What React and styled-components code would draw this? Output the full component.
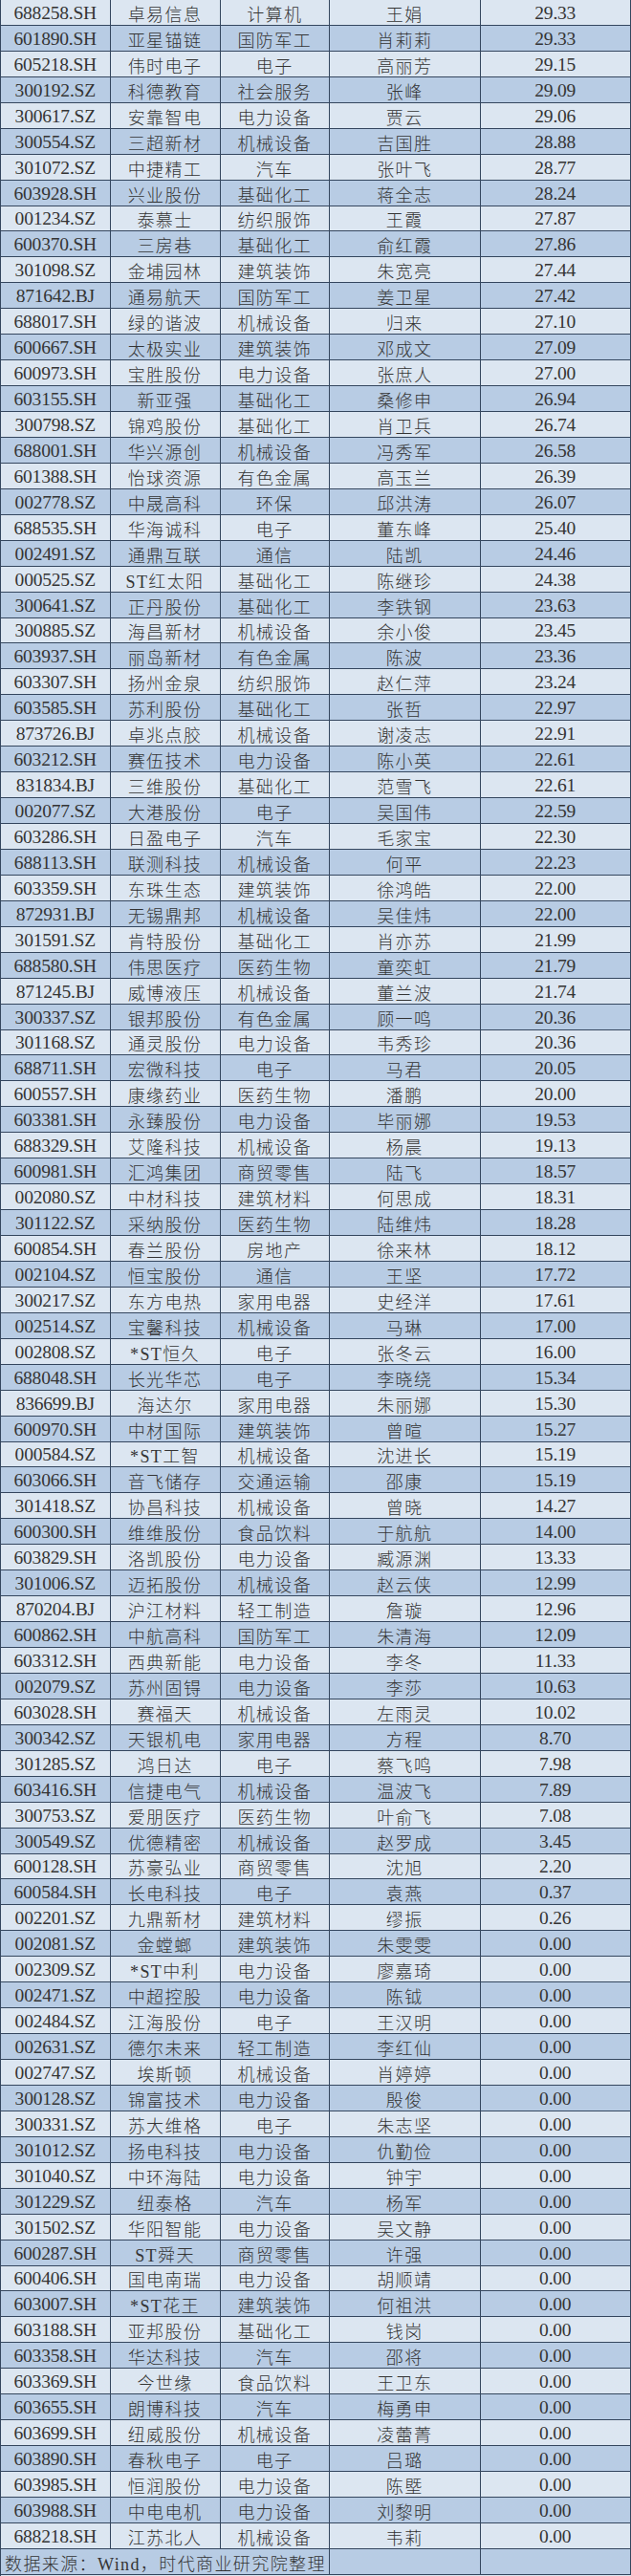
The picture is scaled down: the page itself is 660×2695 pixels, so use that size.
import React from 'react';
import styled, { createGlobalStyle } from 'styled-components';

const GlobalStyle = createGlobalStyle`
  html, body {
    margin: 0;
    padding: 0;
    background: #dbe5f0;
  }
`;

const rows = [
  ['688258.SH', '卓易信息', '计算机', '王娟', '29.33'],
  ['601890.SH', '亚星锚链', '国防军工', '肖莉莉', '29.33'],
  ['605218.SH', '伟时电子', '电子', '高丽芳', '29.15'],
  ['300192.SZ', '科德教育', '社会服务', '张峰', '29.09'],
  ['300617.SZ', '安靠智电', '电力设备', '贾云', '29.06'],
  ['300554.SZ', '三超新材', '机械设备', '吉国胜', '28.88'],
  ['301072.SZ', '中捷精工', '汽车', '张叶飞', '28.77'],
  ['603928.SH', '兴业股份', '基础化工', '蒋全志', '28.24'],
  ['001234.SZ', '泰慕士', '纺织服饰', '王霞', '27.87'],
  ['600370.SH', '三房巷', '基础化工', '俞红霞', '27.86'],
  ['301098.SZ', '金埔园林', '建筑装饰', '朱宽亮', '27.44'],
  ['871642.BJ', '通易航天', '国防军工', '姜卫星', '27.42'],
  ['688017.SH', '绿的谐波', '机械设备', '归来', '27.10'],
  ['600667.SH', '太极实业', '建筑装饰', '邓成文', '27.09'],
  ['600973.SH', '宝胜股份', '电力设备', '张庶人', '27.00'],
  ['603155.SH', '新亚强', '基础化工', '桑修申', '26.94'],
  ['300798.SZ', '锦鸡股份', '基础化工', '肖卫兵', '26.74'],
  ['688001.SH', '华兴源创', '机械设备', '冯秀军', '26.58'],
  ['601388.SH', '怡球资源', '有色金属', '高玉兰', '26.39'],
  ['002778.SZ', '中晟高科', '环保', '邱洪涛', '26.07'],
  ['688535.SH', '华海诚科', '电子', '董东峰', '25.40'],
  ['002491.SZ', '通鼎互联', '通信', '陆凯', '24.46'],
  ['000525.SZ', 'ST红太阳', '基础化工', '陈继珍', '24.38'],
  ['300641.SZ', '正丹股份', '基础化工', '李铁钢', '23.63'],
  ['300885.SZ', '海昌新材', '机械设备', '余小俊', '23.45'],
  ['603937.SH', '丽岛新材', '有色金属', '陈波', '23.36'],
  ['603307.SH', '扬州金泉', '纺织服饰', '赵仁萍', '23.24'],
  ['603585.SH', '苏利股份', '基础化工', '张哲', '22.97'],
  ['873726.BJ', '卓兆点胶', '机械设备', '谢凌志', '22.91'],
  ['603212.SH', '赛伍技术', '电力设备', '陈小英', '22.61'],
  ['831834.BJ', '三维股份', '基础化工', '范雪飞', '22.61'],
  ['002077.SZ', '大港股份', '电子', '吴国伟', '22.59'],
  ['603286.SH', '日盈电子', '汽车', '毛家宝', '22.30'],
  ['688113.SH', '联测科技', '机械设备', '何平', '22.23'],
  ['603359.SH', '东珠生态', '建筑装饰', '徐鸿皓', '22.00'],
  ['872931.BJ', '无锡鼎邦', '机械设备', '吴佳炜', '22.00'],
  ['301591.SZ', '肯特股份', '基础化工', '肖亦苏', '21.99'],
  ['688580.SH', '伟思医疗', '医药生物', '童奕虹', '21.79'],
  ['871245.BJ', '威博液压', '机械设备', '董兰波', '21.74'],
  ['300337.SZ', '银邦股份', '有色金属', '顾一鸣', '20.36'],
  ['301168.SZ', '通灵股份', '电力设备', '韦秀珍', '20.36'],
  ['688711.SH', '宏微科技', '电子', '马君', '20.05'],
  ['600557.SH', '康缘药业', '医药生物', '潘鹏', '20.00'],
  ['603381.SH', '永臻股份', '电力设备', '毕丽娜', '19.53'],
  ['688329.SH', '艾隆科技', '机械设备', '杨晨', '19.13'],
  ['600981.SH', '汇鸿集团', '商贸零售', '陆飞', '18.57'],
  ['002080.SZ', '中材科技', '建筑材料', '何思成', '18.31'],
  ['301122.SZ', '采纳股份', '医药生物', '陆维炜', '18.28'],
  ['600854.SH', '春兰股份', '房地产', '徐来林', '18.12'],
  ['002104.SZ', '恒宝股份', '通信', '王坚', '17.72'],
  ['300217.SZ', '东方电热', '家用电器', '史经洋', '17.61'],
  ['002514.SZ', '宝馨科技', '机械设备', '马琳', '17.00'],
  ['002808.SZ', '*ST恒久', '电子', '张冬云', '16.00'],
  ['688048.SH', '长光华芯', '电子', '李晓绕', '15.34'],
  ['836699.BJ', '海达尔', '家用电器', '朱丽娜', '15.30'],
  ['600970.SH', '中材国际', '建筑装饰', '曾暄', '15.27'],
  ['000584.SZ', '*ST工智', '机械设备', '沈进长', '15.19'],
  ['603066.SH', '音飞储存', '交通运输', '邵康', '15.19'],
  ['301418.SZ', '协昌科技', '机械设备', '曾晓', '14.27'],
  ['600300.SH', '维维股份', '食品饮料', '于航航', '14.00'],
  ['603829.SH', '洛凯股份', '电力设备', '臧源渊', '13.33'],
  ['301006.SZ', '迈拓股份', '机械设备', '赵云侠', '12.99'],
  ['870204.BJ', '沪江材料', '轻工制造', '詹璇', '12.96'],
  ['600862.SH', '中航高科', '国防军工', '朱清海', '12.09'],
  ['603312.SH', '西典新能', '电力设备', '李冬', '11.33'],
  ['002079.SZ', '苏州固锝', '电力设备', '李莎', '10.63'],
  ['603028.SH', '赛福天', '机械设备', '左雨灵', '10.02'],
  ['300342.SZ', '天银机电', '家用电器', '方程', '8.70'],
  ['301285.SZ', '鸿日达', '电子', '蔡飞鸣', '7.98'],
  ['603416.SH', '信捷电气', '机械设备', '温波飞', '7.89'],
  ['300753.SZ', '爱朋医疗', '医药生物', '叶俞飞', '7.08'],
  ['300549.SZ', '优德精密', '机械设备', '赵罗成', '3.45'],
  ['600128.SH', '苏豪弘业', '商贸零售', '沈旭', '2.20'],
  ['600584.SH', '长电科技', '电子', '袁燕', '0.37'],
  ['002201.SZ', '九鼎新材', '建筑材料', '缪振', '0.26'],
  ['002081.SZ', '金螳螂', '建筑装饰', '朱雯雯', '0.00'],
  ['002309.SZ', '*ST中利', '电力设备', '廖嘉琦', '0.00'],
  ['002471.SZ', '中超控股', '电力设备', '陈钺', '0.00'],
  ['002484.SZ', '江海股份', '电子', '王汉明', '0.00'],
  ['002631.SZ', '德尔未来', '轻工制造', '李红仙', '0.00'],
  ['002747.SZ', '埃斯顿', '机械设备', '肖婷婷', '0.00'],
  ['300128.SZ', '锦富技术', '电力设备', '殷俊', '0.00'],
  ['300331.SZ', '苏大维格', '电子', '朱志坚', '0.00'],
  ['301012.SZ', '扬电科技', '电力设备', '仇勤俭', '0.00'],
  ['301040.SZ', '中环海陆', '电力设备', '钟宇', '0.00'],
  ['301229.SZ', '纽泰格', '汽车', '杨军', '0.00'],
  ['301502.SZ', '华阳智能', '电力设备', '吴文静', '0.00'],
  ['600287.SH', 'ST舜天', '商贸零售', '许强', '0.00'],
  ['600406.SH', '国电南瑞', '电力设备', '胡顺靖', '0.00'],
  ['603007.SH', '*ST花王', '建筑装饰', '何祖洪', '0.00'],
  ['603188.SH', '亚邦股份', '基础化工', '钱岗', '0.00'],
  ['603358.SH', '华达科技', '汽车', '邵将', '0.00'],
  ['603369.SH', '今世缘', '食品饮料', '王卫东', '0.00'],
  ['603655.SH', '朗博科技', '汽车', '梅勇申', '0.00'],
  ['603699.SH', '纽威股份', '机械设备', '凌蕾菁', '0.00'],
  ['603890.SH', '春秋电子', '电子', '吕璐', '0.00'],
  ['603985.SH', '恒润股份', '电力设备', '陈塈', '0.00'],
  ['603988.SH', '中电电机', '电力设备', '刘黎明', '0.00'],
  ['688218.SH', '江苏北人', '机械设备', '韦莉', '0.00'],
];

const COLUMNS = '114.5px 115px 114.5px 157.5px 1fr';

const Table = styled.div`
  width: 660px;
  height: 2695px;
  overflow: hidden;
  box-sizing: border-box;
  border-left: 1px solid #34465e;
  color: #343434;
  font-family: "Liberation Serif", "Noto Sans CJK SC", serif;
`;

const Row = styled.div`
  display: grid;
  grid-template-columns: ${COLUMNS};
  height: 26.95px;
  background: ${props => (props.$dark ? '#b8cce4' : '#dce6f1')};
`;

const Cell = styled.div`
  box-sizing: border-box;
  display: flex;
  align-items: center;
  justify-content: center;
  padding-top: 2px;
  border-right: 1px solid #34465e;
  border-bottom: 1px solid #34465e;
  white-space: nowrap;
  overflow: hidden;
  font-size: ${props => (props.$num ? '19.5px' : '18px')};
  letter-spacing: ${props => (props.$num ? '-0.2px' : '1.4px')};
  font-weight: 300;
`;

const NoteCell = styled(Cell)`
  grid-column: span 3;
  justify-content: flex-start;
  padding-left: 4px;
  font-size: 18px;
  letter-spacing: 1.4px;
`;

export default function App() {
  return (
    <>
      <GlobalStyle />
      <Table>
        {rows.map((r, i) => (
          <Row key={r[0]} $dark={i % 2 === 1}>
            <Cell $num>{r[0]}</Cell>
            <Cell>{r[1]}</Cell>
            <Cell>{r[2]}</Cell>
            <Cell>{r[3]}</Cell>
            <Cell $num>{r[4]}</Cell>
          </Row>
        ))}
        <Row $dark>
          <NoteCell>数据来源：Wind，时代商业研究院整理</NoteCell>
          <Cell />
          <Cell />
        </Row>
      </Table>
    </>
  );
}
